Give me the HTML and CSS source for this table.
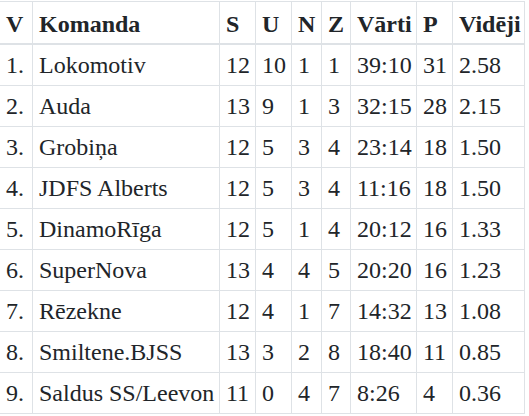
FILE: index.html
```html
<!DOCTYPE html>
<html lang="lv">
<head>
<meta charset="utf-8">
<link rel="stylesheet" href="styles.css">
</head>
<body>
<table class="standings">
  <colgroup>
    <col class="c-pos"><col class="c-team"><col class="c-num"><col class="c-num"><col class="c-n"><col class="c-z"><col class="c-goals"><col class="c-num"><col class="c-avg">
  </colgroup>
  <thead>
    <tr><th>V</th><th>Komanda</th><th>S</th><th>U</th><th>N</th><th>Z</th><th>Vārti</th><th>P</th><th>Vidēji</th></tr>
  </thead>
  <tbody>
    <tr><td>1.</td><td>Lokomotiv</td><td>12</td><td>10</td><td>1</td><td>1</td><td>39:10</td><td>31</td><td>2.58</td></tr>
    <tr><td>2.</td><td>Auda</td><td>13</td><td>9</td><td>1</td><td>3</td><td>32:15</td><td>28</td><td>2.15</td></tr>
    <tr><td>3.</td><td>Grobiņa</td><td>12</td><td>5</td><td>3</td><td>4</td><td>23:14</td><td>18</td><td>1.50</td></tr>
    <tr><td>4.</td><td>JDFS Alberts</td><td>12</td><td>5</td><td>3</td><td>4</td><td>11:16</td><td>18</td><td>1.50</td></tr>
    <tr><td>5.</td><td>DinamoRīga</td><td>12</td><td>5</td><td>1</td><td>4</td><td>20:12</td><td>16</td><td>1.33</td></tr>
    <tr><td>6.</td><td>SuperNova</td><td>13</td><td>4</td><td>4</td><td>5</td><td>20:20</td><td>16</td><td>1.23</td></tr>
    <tr><td>7.</td><td>Rēzekne</td><td>12</td><td>4</td><td>1</td><td>7</td><td>14:32</td><td>13</td><td>1.08</td></tr>
    <tr><td>8.</td><td>Smiltene.BJSS</td><td>13</td><td>3</td><td>2</td><td>8</td><td>18:40</td><td>11</td><td>0.85</td></tr>
    <tr><td>9.</td><td>Saldus SS/Leevon</td><td>11</td><td>0</td><td>4</td><td>7</td><td>8:26</td><td>4</td><td>0.36</td></tr>
  </tbody>
</table>
</body>
</html>
```

FILE: styles.css
```css
html, body {
  margin: 0;
  padding: 0;
  background: #ffffff;
  overflow: hidden;
}

.standings {
  border-collapse: collapse;
  table-layout: fixed;
  width: 525px;
  margin: 1px 0 0 -1px;
  font-family: "Liberation Serif", "Times New Roman", serif;
  font-size: 24px;
  line-height: 28px;
  color: #212529;
}

.c-pos { width: 33px; }
.c-team { width: 187px; }
.c-num { width: 36px; }
.c-n { width: 30px; }
.c-z { width: 29px; }
.c-goals { width: 66px; }
.c-avg { width: 72px; }

.standings th,
.standings td {
  border: 1px solid #dee2e6;
  padding: 6px 0 6px 6px;
  text-align: left;
  white-space: nowrap;
  vertical-align: top;
  overflow: visible;
}

.standings th {
  font-weight: bold;
  padding-top: 8px;
  padding-bottom: 5px;
}

.standings thead th {
  border-bottom: 2px solid #dee2e6;
}
```
